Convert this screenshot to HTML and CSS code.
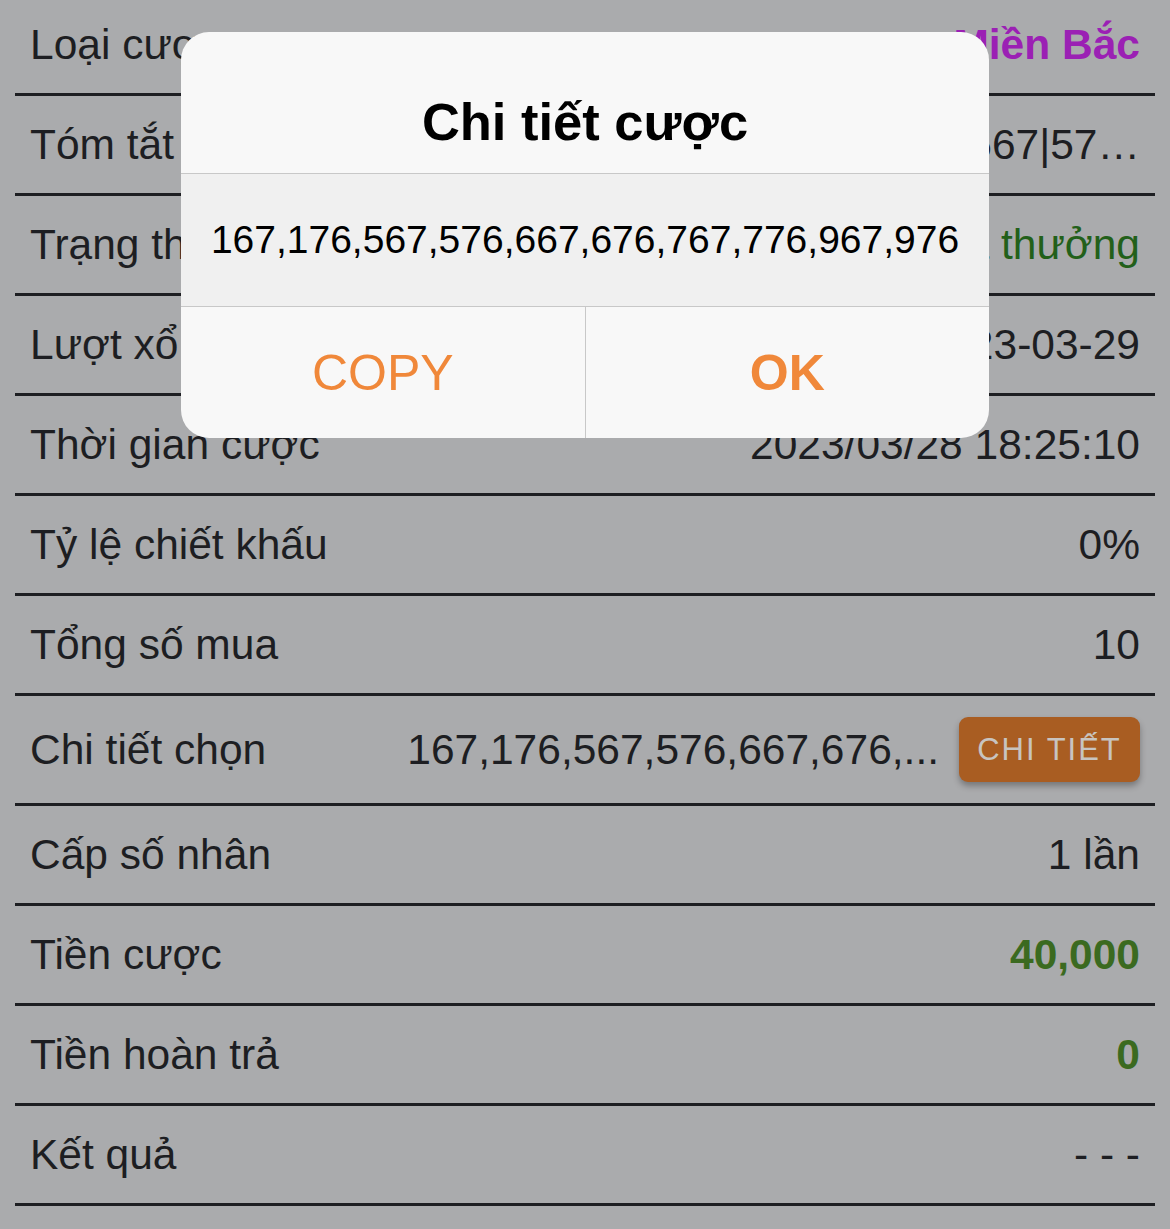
FILE: index.html
```html
<!DOCTYPE html>
<html lang="vi">
<head>
<meta charset="utf-8">
<title>Chi tiết cược</title>
<link rel="stylesheet" href="styles.css">
</head>
<body>
<main class="page">
  <ul class="detail-list">
    <li class="row"><span class="label">Loại cược</span><span class="value purple">Miền Bắc</span></li>
    <li class="row"><span class="label">Tóm tắt</span><span class="value">167|176|567|57…</span></li>
    <li class="row"><span class="label">Trạng thái</span><span class="value green">Chưa trả thưởng</span></li>
    <li class="row"><span class="label">Lượt xổ</span><span class="value">2023-03-29</span></li>
    <li class="row"><span class="label">Thời gian cược</span><span class="value">2023/03/28 18:25:10</span></li>
    <li class="row"><span class="label">Tỷ lệ chiết khấu</span><span class="value">0%</span></li>
    <li class="row"><span class="label">Tổng số mua</span><span class="value">10</span></li>
    <li class="row row-tall"><span class="label">Chi tiết chọn</span><span class="value-group"><span class="value">167,176,567,576,667,676,...</span><button class="btn-detail" type="button">CHI TIẾT</button></span></li>
    <li class="row"><span class="label">Cấp số nhân</span><span class="value">1 lần</span></li>
    <li class="row"><span class="label">Tiền cược</span><span class="value money">40,000</span></li>
    <li class="row"><span class="label">Tiền hoàn trả</span><span class="value money">0</span></li>
    <li class="row"><span class="label">Kết quả</span><span class="value">- - -</span></li>
  </ul>
</main>
<div class="alert" role="dialog" aria-label="Chi tiết cược">
  <div class="alert-title">Chi tiết cược</div>
  <div class="alert-message">167,176,567,576,667,676,767,776,967,976</div>
  <div class="alert-actions">
    <button class="alert-btn" type="button">COPY</button>
    <button class="alert-btn alert-btn-bold" type="button">OK</button>
  </div>
</div>
</body>
</html>
```

FILE: styles.css
```css
* {
  box-sizing: border-box;
}

html,
body {
  margin: 0;
  padding: 0;
}

body {
  width: 1170px;
  height: 1229px;
  overflow: hidden;
  background: #aaabad;
  color: #1d1e22;
  font-family: "Liberation Sans", Arial, sans-serif;
}

.page {
  display: block;
}

.detail-list {
  list-style: none;
  margin: -4px 15px 0;
  padding: 0;
}

.row {
  display: flex;
  align-items: center;
  justify-content: space-between;
  height: 100px;
  padding: 0 15px;
  border-bottom: 3px solid #1d1e22;
  font-size: 42.5px;
  white-space: nowrap;
}

.row-tall {
  height: 110px;
}

.value {
  text-align: right;
}

.purple {
  color: #9b20b4;
  font-weight: bold;
}

.green {
  color: #22601a;
}

.money {
  color: #3b6a20;
  font-weight: bold;
}

.value-group {
  display: flex;
  align-items: center;
  gap: 20px;
}

.btn-detail {
  width: 181px;
  height: 65px;
  border: 0;
  border-radius: 9px;
  background: #a95d22;
  color: #c8c4c0;
  font-family: "Liberation Sans", Arial, sans-serif;
  font-size: 31px;
  letter-spacing: 2px;
  padding: 0;
  box-shadow: 0 4px 6px rgba(0, 0, 0, 0.3);
}

.alert {
  position: absolute;
  left: 181px;
  top: 32px;
  width: 808px;
  background: #f8f8f8;
  border-radius: 28px;
  overflow: hidden;
  color: #000;
}

.alert-title {
  height: 142px;
  padding-top: 64px;
  font-size: 52.5px;
  line-height: 52px;
  font-weight: bold;
  text-align: center;
  border-bottom: 1px solid #c8c8c8;
}

.alert-message {
  display: flex;
  align-items: center;
  justify-content: center;
  height: 133px;
  background: #f0f0f0;
  border-bottom: 1px solid #c8c8c8;
  font-size: 39px;
  white-space: nowrap;
}

.alert-actions {
  display: flex;
  height: 131px;
}

.alert-btn {
  flex: 1;
  border: 0;
  background: transparent;
  color: #f0883a;
  font-family: "Liberation Sans", Arial, sans-serif;
  font-size: 50px;
  padding: 0;
}

.alert-btn + .alert-btn {
  border-left: 1px solid #c8c8c8;
}

.alert-btn-bold {
  font-weight: bold;
}
```
